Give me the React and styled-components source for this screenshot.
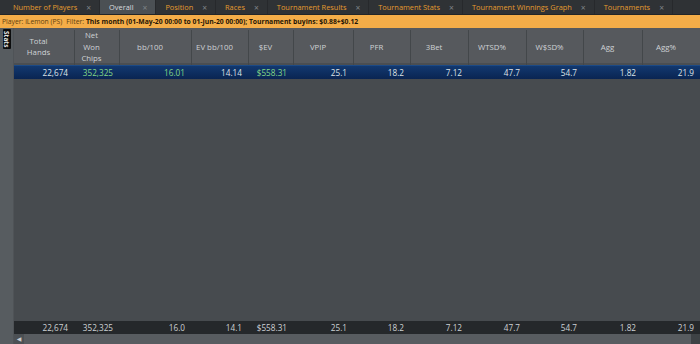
import React from "react";
import styled, { createGlobalStyle } from "styled-components";

const GlobalStyle = createGlobalStyle`
    html, body {
        margin: 0;
        padding: 0;
        background: #464a4e;
    }
    body {
        font-family: "Open Sans", "DejaVu Sans", sans-serif;
        font-size: 8px;
    }
`;

const COLS = "60px 45px 72px 57px 45px 60px 57px 58px 58px 57px 59px 58px";

const Screen = styled.div`
    width: 700px;
    height: 344px;
    display: grid;
    grid-template-rows: 15px 13px 1fr;
    overflow: hidden;
`;

const TabBar = styled.div`
    display: flex;
    background: #2f3235;
    border-bottom: 1px solid #232527;
    font-size: 7.4px;
`;

const Tab = styled.div`
    display: flex;
    align-items: center;
    gap: 9px;
    padding: 0 8px 0 ${(p) => (p.first ? "13px" : "9px")};
    color: ${(p) => (p.active ? "#d9dcde" : "#e49b2f")};
    background: ${(p) => (p.active ? "#4b5054" : "transparent")};
    border-right: 1px solid #27292c;
    white-space: nowrap;
`;

const Close = styled.span`
    color: #7f8387;
    font-size: 8.5px;
`;

const FilterBar = styled.div`
    display: flex;
    align-items: center;
    gap: 4px;
    padding-left: 2px;
    background: #f4ad48;
    color: #5e3f10;
    white-space: nowrap;
    font-size: 6.8px;
`;

const Bold = styled.b`
    color: #1f1506;
    font-weight: 700;
`;

const Main = styled.div`
    display: flex;
    min-height: 0;
`;

const SideStrip = styled.div`
    width: 13px;
    flex: none;
    background: #575c60;
    border-right: 1px solid #4f5357;
    padding-top: 1px;
    display: flex;
    flex-direction: column;
    align-items: center;
`;

const SideLabel = styled.div`
    writing-mode: vertical-rl;
    background: #0c0d0e;
    color: #e6e6e6;
    font-size: 6.5px;
    font-weight: 700;
    padding: 2px 0;
    width: 8px;
    display: flex;
    align-items: center;
    border-radius: 1px;
`;

const TableArea = styled.div`
    flex: 1;
    display: flex;
    flex-direction: column;
    min-width: 0;
`;

const HeaderRow = styled.div`
    display: grid;
    grid-template-columns: ${COLS};
    height: 35px;
    background: #56595d;
    border-bottom: 2px solid #4a4e52;
`;

const HeaderCell = styled.div`
    display: flex;
    align-items: center;
    justify-content: center;
    text-align: center;
    padding-right: 11px;
    line-height: 11.5px;
    color: #cfd2d5;
    font-size: 7.8px;
    border-left: ${(p) => (p.first ? "none" : "1px solid #43474a")};
    margin: 2px 0;
`;

const DataRow = styled.div`
    display: grid;
    grid-template-columns: ${COLS};
    height: 13px;
    align-items: center;
    background: linear-gradient(#12386f, #0a2552);
    border-top: 1px solid #1c4a86;
`;

const Cell = styled.div`
    text-align: right;
    padding-right: 6px;
    font-size: 8.2px;
    color: ${(p) => (p.green ? "#84d886" : "#dfe3e6")};
`;

const Body = styled.div`
    flex: 1;
    background: #474b4f;
`;

const FooterRow = styled.div`
    display: grid;
    grid-template-columns: ${COLS};
    height: 13px;
    align-items: center;
    background: #25282b;
`;

const FooterCell = styled(Cell)`
    color: #cdd1d4;
`;

const ScrollBar = styled.div`
    height: 10px;
    display: flex;
    background: #55595d;
`;

const ScrollArrow = styled.div`
    width: 10px;
    display: flex;
    align-items: center;
    justify-content: center;
    background: #4c5054;
    color: #c9ccce;
    font-size: 6px;
`;

const ScrollTrack = styled.div`
    flex: 1;
    background: #585c60;
`;

const ScrollCorner = styled.div`
    width: 9px;
    background: #3e4245;
`;

const tabs = [
    "Number of Players",
    "Overall",
    "Position",
    "Races",
    "Tournament Results",
    "Tournament Stats",
    "Tournament Winnings Graph",
    "Tournaments",
];

const headers = [
    ["Total", "Hands"],
    ["Net", "Won", "Chips"],
    ["bb/100"],
    ["EV bb/100"],
    ["$EV"],
    ["VPIP"],
    ["PFR"],
    ["3Bet"],
    ["WTSD%"],
    ["W$SD%"],
    ["Agg"],
    ["Agg%"],
];

const row = [
    { v: "22,674" },
    { v: "352,325", green: true },
    { v: "16.01", green: true },
    { v: "14.14" },
    { v: "$558.31", green: true },
    { v: "25.1" },
    { v: "18.2" },
    { v: "7.12" },
    { v: "47.7" },
    { v: "54.7" },
    { v: "1.82" },
    { v: "21.9" },
];

const totals = ["22,674", "352,325", "16.0", "14.1", "$558.31", "25.1", "18.2", "7.12", "47.7", "54.7", "1.82", "21.9"];

export default function App() {
    return (
        <Screen>
            <GlobalStyle />
            <TabBar>
                {tabs.map((t, i) => (
                    <Tab key={t} first={i === 0} active={t === "Overall"}>
                        {t}
                        <Close>×</Close>
                    </Tab>
                ))}
            </TabBar>
            <FilterBar>
                <span>Player: iLemon (PS)</span>
                <span>
                    Filter: <Bold>This month (01-May-20 00:00 to 01-Jun-20 00:00); Tournament buyins: $0.88+$0.12</Bold>
                </span>
            </FilterBar>
            <Main>
                <SideStrip>
                    <SideLabel>Stats</SideLabel>
                </SideStrip>
                <TableArea>
                    <HeaderRow>
                        {headers.map((h, i) => (
                            <HeaderCell key={i} first={i === 0}>
                                <div>
                                    {h.map((line) => (
                                        <div key={line}>{line}</div>
                                    ))}
                                </div>
                            </HeaderCell>
                        ))}
                    </HeaderRow>
                    <DataRow>
                        {row.map((c, i) => (
                            <Cell key={i} green={c.green}>
                                {c.v}
                            </Cell>
                        ))}
                    </DataRow>
                    <Body />
                    <FooterRow>
                        {totals.map((v, i) => (
                            <FooterCell key={i}>{v}</FooterCell>
                        ))}
                    </FooterRow>
                    <ScrollBar>
                        <ScrollArrow>◀</ScrollArrow>
                        <ScrollTrack />
                        <ScrollCorner />
                    </ScrollBar>
                </TableArea>
            </Main>
        </Screen>
    );
}
